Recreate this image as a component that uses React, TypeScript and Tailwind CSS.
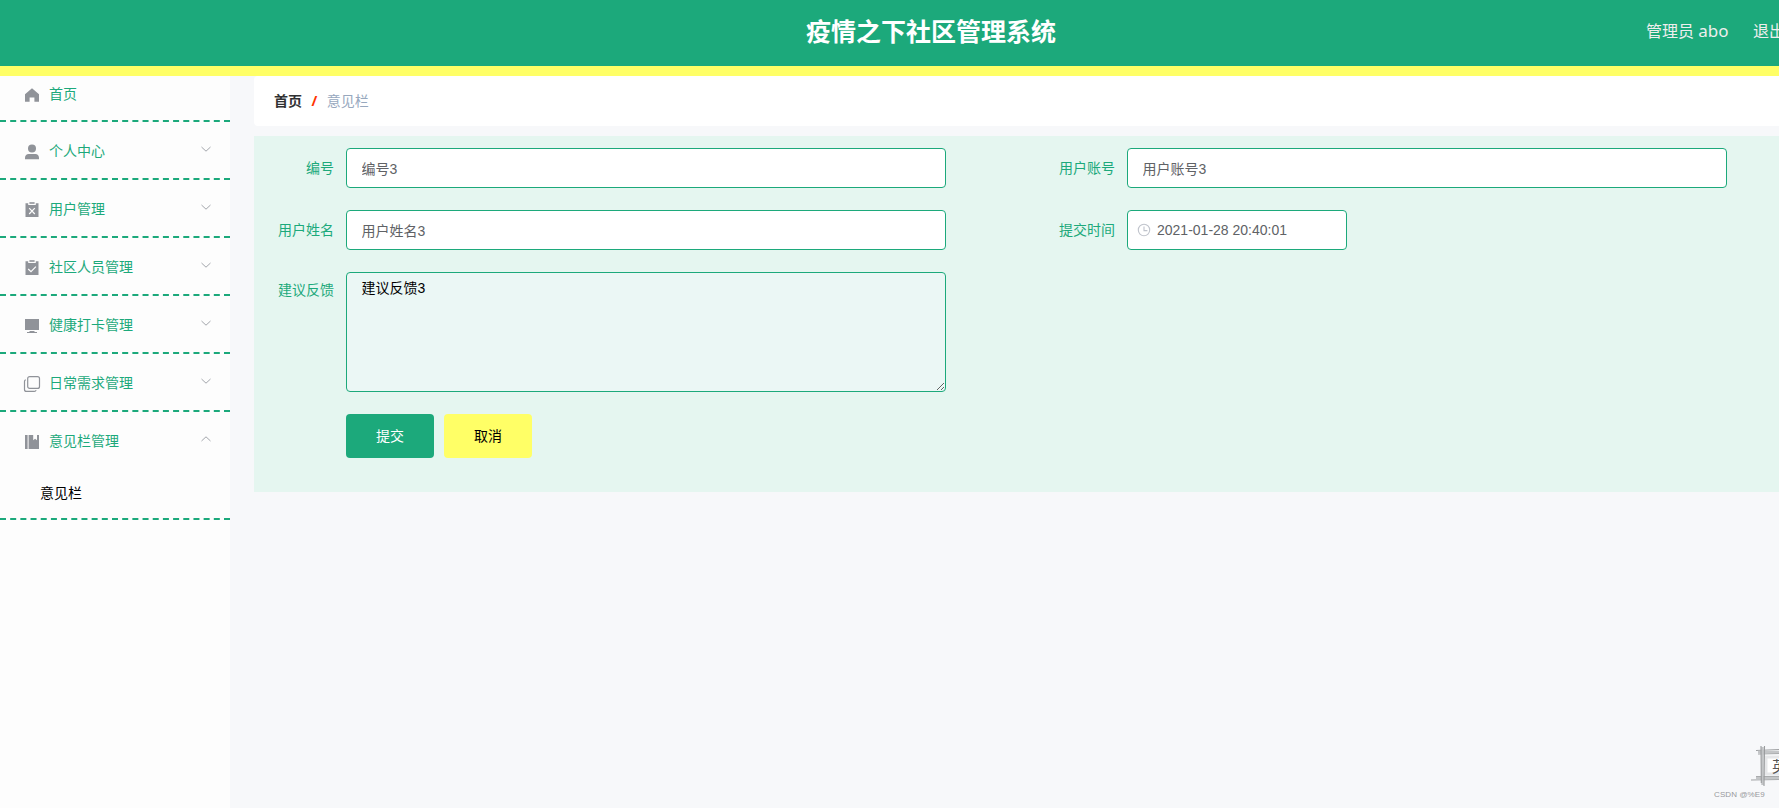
import type { ReactNode } from "react";

type MenuItem = {
  label: string;
  icon: ReactNode;
  arrow?: "down" | "up";
  children?: string[];
};

const HomeIcon = () => (
  <svg className="size-[18px]" viewBox="0 0 18 18" fill="#909399">
    <path d="M9 2.200 16 8.200V15.800h-4.600v-4.400H6.600v4.400H2V8.200z" />
  </svg>
);

const UserIcon = () => (
  <svg className="size-[18px]" viewBox="0 0 18 18" fill="#909399">
    <circle cx="9" cy="5.400" r="4" />
    <path d="M2 16.300v-1.800c0-2.100 1.600-3.600 3.600-3.600h6.800c2 0 3.600 1.500 3.600 3.600v1.800z" />
  </svg>
);

const ReleaseIcon = () => (
  <svg className="size-[18px]" viewBox="0 0 18 18" fill="#909399">
    <path d="M6.400 1.200h5.200v1.600H6.400z" />
    <path d="M2.500 2.200h2.700v1.700h7.600V2.200h2.700v13.900H2.500z" />
    <path d="m6.200 7.200 5.600 5.800m0-5.800-5.600 5.800" stroke="#fdfdfd" strokeWidth="1.200" />
  </svg>
);

const ClaimIcon = () => (
  <svg className="size-[18px]" viewBox="0 0 18 18" fill="#909399">
    <path d="M6.400 1.200h5.200v1.600H6.400z" />
    <path d="M2.500 2.200h2.700v1.700h7.600V2.200h2.700v13.900H2.500z" />
    <path d="m5.200 10 2.800 2.700 4.900-5" fill="none" stroke="#fdfdfd" strokeWidth="1.200" />
  </svg>
);

const PlatformIcon = () => (
  <svg className="size-[18px]" viewBox="0 0 18 18" fill="#909399">
    <path d="M2 2h14v11H2z" />
    <path d="M6.500 14h5v1H14v1H4v-1h2.500z" />
  </svg>
);

const CopyIcon = () => (
  <svg className="size-[18px]" viewBox="0 0 18 18" fill="none" stroke="#909399" strokeWidth="1.200">
    <rect x="4.700" y="1.600" width="11.800" height="11.800" rx="2" />
    <path d="M2.800 4.800c-1 .3-1.300 1-1.300 1.800v7.800c0 1.200.9 2 2 2h7.800c1 0 1.600-.5 1.800-1.300" />
  </svg>
);

const ManagementIcon = () => (
  <svg className="size-[18px]" viewBox="0 0 18 18" fill="#909399">
    <path d="M2 2h2.600v14H2zM5.600 2H10.200v5.200l1.900-1.400 1.900 1.400V2h2v14H5.600z" />
  </svg>
);

const ClockIcon = () => (
  <svg className="size-[14px]" viewBox="0 0 14 14" fill="none" stroke="#c0c4cc" strokeWidth="1.100">
    <circle cx="7" cy="7" r="5.700" />
    <path d="M7 3.600v4h3.400" />
  </svg>
);

const Arrow = ({ up = false }: { up?: boolean }) => (
  <svg className="mb-[3px] ml-auto h-3 w-3" viewBox="0 0 12 12" fill="none" stroke="#a3a6ac">
    <path d={up ? "M1.500 8 6 3.800 10.500 8" : "M1.500 4 6 8.200 10.500 4"} />
  </svg>
);

const MENU: MenuItem[] = [
  { label: "首页", icon: <HomeIcon /> },
  { label: "个人中心", icon: <UserIcon />, arrow: "down" },
  { label: "用户管理", icon: <ReleaseIcon />, arrow: "down" },
  { label: "社区人员管理", icon: <ClaimIcon />, arrow: "down" },
  { label: "健康打卡管理", icon: <PlatformIcon />, arrow: "down" },
  { label: "日常需求管理", icon: <CopyIcon />, arrow: "down" },
  { label: "意见栏管理", icon: <ManagementIcon />, arrow: "up", children: ["意见栏"] },
];

function Sidebar() {
  return (
    <aside className="w-[230px] shrink-0 overflow-hidden bg-[#fdfdfd]">
      {/* the first entry is partly tucked under the header */}
      <ul className="-mt-3">
        {MENU.map((item) => (
          <li key={item.label} className="group border-b-2 border-dashed border-[#1ca97b]">
            <div className="flex h-14 items-center pr-[18px] pl-5">
              <span className="mt-[3px] mr-[5px] flex w-6 shrink-0 justify-center group-first:mt-[5px]">{item.icon}</span>
              <span className="mt-px text-[14px] leading-5 text-[#1ca97b] group-first:mt-[3px]">{item.label}</span>
              {item.arrow && <Arrow up={item.arrow === "up"} />}
            </div>
            {item.children?.map((child) => (
              <div key={child} className="flex h-[50px] items-center pb-0.5 pl-10 text-[14px] text-black">
                {child}
              </div>
            ))}
          </li>
        ))}
      </ul>
    </aside>
  );
}

function Field({ label, children }: { label: string; children: ReactNode }) {
  return (
    <div className="group flex flex-1 items-start">
      <label className="w-20 shrink-0 pr-3 text-right leading-10 whitespace-nowrap text-[#1ca97b] group-has-[textarea]:leading-9">
        {label}
      </label>
      {children}
    </div>
  );
}

const inputClass =
  "h-10 w-[600px] rounded border border-[#1ca97b] bg-white px-[14.500px] font-['Liberation_Sans','Noto_Sans_CJK_SC',sans-serif] text-[14px] text-[#606266] outline-none";

export default function App() {
  return (
    <div className="relative flex h-[808px] w-full flex-col overflow-hidden bg-[#f7f8fa] font-['Noto_Sans','Noto_Sans_CJK_SC',sans-serif] text-[14px]">
      <header className="flex h-[76px] shrink-0 border-b-10 border-[#ffff66] bg-[#1ca97b] whitespace-nowrap">
        <h1 className="ml-[806px] w-[840px] shrink-0 text-[25px] leading-[62px] font-bold text-white">
          疫情之下社区管理系统
        </h1>
        <div className="flex shrink-0 gap-6 text-[16px] leading-[62px] text-[#eeeeee]">
          <span className="w-[83px]">
            管理员 <span className="text-[17px]">abo</span>
          </span>
          <span>退出</span>
        </div>
      </header>

      <div className="flex min-h-0 flex-1">
        <Sidebar />

        <main className="ml-6 min-w-0 flex-1">
          <nav className="flex h-[50px] items-center rounded-l bg-white pb-0.5 pl-5">
            <span className="font-bold text-[#303133]">首页</span>
            <span className="mx-[9.500px] font-bold text-[#ff3300]">/</span>
            <span className="text-[#97a8be]">意见栏</span>
          </nav>

          <form className="mt-2.5 flex h-[356px] flex-col gap-[22px] bg-[#e5f6f0] pt-3 pl-3">
            <div className="flex w-[1562px]">
              <Field label="编号">
                <input className={inputClass} defaultValue="编号3" />
              </Field>
              <Field label="用户账号">
                <input className={inputClass} defaultValue="用户账号3" />
              </Field>
            </div>
            <div className="flex w-[1562px]">
              <Field label="用户姓名">
                <input className={inputClass} defaultValue="用户姓名3" />
              </Field>
              <Field label="提交时间">
                <div className="flex h-10 w-[220px] items-center gap-[6px] rounded border border-[#1ca97b] bg-white pl-[9px] font-['Liberation_Sans'] text-[#606266]">
                  <ClockIcon />
                  <span>2021-01-28 20:40:01</span>
                </div>
              </Field>
            </div>
            <Field label="建议反馈">
              <textarea
                className="h-[120px] w-[600px] resize rounded border border-[#1ca97b] bg-[#ebf7f5] px-[14.500px] py-[5px] font-['Liberation_Sans','Noto_Sans_CJK_SC',sans-serif] text-[14px] leading-[21px] text-black outline-none"
                defaultValue="建议反馈3"
              />
            </Field>
            <div className="mb-[34px] flex shrink-0 gap-2.5 pl-20">
              <button type="button" className="h-11 w-[88px] rounded bg-[#1ca97b] pb-0.5 text-white">
                提交
              </button>
              <button type="button" className="h-11 w-[88px] rounded bg-[#ffff66] pb-0.5 text-black">
                取消
              </button>
            </div>
          </form>
        </main>
      </div>

      {/* input-method badge and watermark in the corner */}
      <div className="absolute top-[745px] left-[1750px] h-[42px] w-[29px] overflow-hidden">
        <svg className="absolute inset-0" width="29" height="42" fill="none">
          <path d="M14 10h15v20H14z" fill="#fff" />
          <path d="M16 12v18M14 29h15M14 12h15" stroke="#e6e7e9" strokeWidth="3" />
          <path d="M6 5.500 29 4.500M8 9l21-.5M6 31.500h23M1 35l28-.5" stroke="#a0a2a4" strokeWidth="1.200" />
          <path d="M8 7h21M6 33h23M12.500 2v38" stroke="#c3c5c7" strokeWidth="2.500" />
          <path d="M11 1 11.300 38M14.500 1 14 41" stroke="#999b9d" strokeWidth="1.100" />
        </svg>
        <span className="absolute top-[9px] left-[22px] font-['Noto_Sans_CJK_SC'] text-[15px] leading-6 text-[#555555]">英</span>
      </div>
      <div className="absolute top-[789px] left-[1714px] w-[60px] font-['Liberation_Sans'] text-[8px] leading-3 tracking-[0.100px] whitespace-nowrap text-[#97999c]">
        CSDN @%E9
      </div>
    </div>
  );
}
